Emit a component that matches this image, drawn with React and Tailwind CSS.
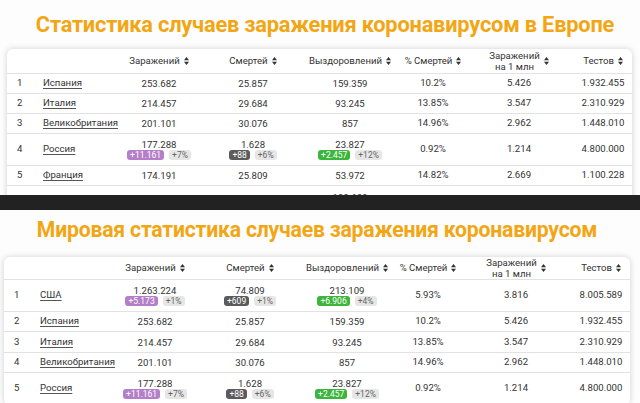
import React from "react";

const Sort = () => (
  <svg width="5" height="8" viewBox="0 0 5 8" className="ml-[4px] shrink-0">
    <path d="M2.5 0L5 3.2H0z M2.5 8L0 4.8h5z" fill="#333" />
  </svg>
);

const badgeColors = {
  p: "bg-[#b47fc8] text-white",
  d: "bg-[#5b5b5b] text-white",
  g: "bg-[#3bb53b] text-white",
  n: "bg-[#e6e6e6] text-[#666]",
};

const Badge = ({ kind, children }) => (
  <span className={`${badgeColors[kind]} inline-block rounded-[3px] px-[3px] text-[8.5px] leading-[10.5px] h-[10.5px]`}>
    {children}
  </span>
);

const Val = ({ v, b, pct, kind }) => (
  <div className="flex flex-col items-center">
    <span className="leading-[11px]">{v}</span>
    {b && (
      <div className="flex items-center gap-[5px]">
        <Badge kind={kind}>{b}</Badge>
        <Badge kind="n">{pct}</Badge>
      </div>
    )}
  </div>
);

const Table = ({ cols, headerH, rows, left, width }) => (
  <div
    className="bg-white rounded-[6px] shadow-[0_0_6px_rgba(0,0,0,0.18)] text-[#333] text-[9.6px]"
    style={{ marginLeft: left, width }}
  >
    <div className="grid items-center border-b border-[#e2e2e2]" style={{ gridTemplateColumns: cols, height: headerH }}>
      <div />
      <div />
      <div className="flex items-center justify-center">Заражений<Sort /></div>
      <div className="flex items-center justify-center">Смертей<Sort /></div>
      <div className="flex items-center justify-center">Выздоровлений<Sort /></div>
      <div className="flex items-center justify-center">% Смертей<Sort /></div>
      <div className="flex items-center justify-center">
        <span className="text-center leading-[11px]">Заражений<br />на 1 млн</span>
        <Sort />
      </div>
      <div className="flex items-center justify-center">Тестов<Sort /></div>
    </div>
    {rows.map((r) => (
      <div
        key={r.n}
        className="grid items-center border-b border-[#e2e2e2]"
        style={{ gridTemplateColumns: cols, height: r.h }}
      >
        <div className="pl-[10px]">{r.partial ? "" : r.n}</div>
        <div className="pl-[8px] whitespace-nowrap">
          {r.c && <span className="underline underline-offset-[1.5px] decoration-[#555]">{r.c}</span>}
        </div>
        <div className="text-center">{r.a && <Val {...r.a} kind="p" />}</div>
        <div className="text-center">{r.d && <Val {...r.d} kind="d" />}</div>
        <div className={`text-center ${r.top ? "self-start pt-[6px]" : ""}`}>{r.r && <Val {...r.r} kind="g" />}</div>
        <div className="text-center">{r.pd}</div>
        <div className="text-center">{r.m}</div>
        <div className="text-center">{r.t}</div>
      </div>
    ))}
  </div>
);

const spain = { c: "Испания", a: { v: "253.682" }, d: { v: "25.857" }, r: { v: "159.359" }, pd: "10.2%", m: "5.426", t: "1.932.455" };
const italy = { c: "Италия", a: { v: "214.457" }, d: { v: "29.684" }, r: { v: "93.245" }, pd: "13.85%", m: "3.547", t: "2.310.929" };
const uk = { c: "Великобритания", a: { v: "201.101" }, d: { v: "30.076" }, r: { v: "857" }, pd: "14.96%", m: "2.962", t: "1.448.010" };
const russia = {
  c: "Россия",
  a: { v: "177.288", b: "+11.161", pct: "+7%" },
  d: { v: "1.628", b: "+88", pct: "+6%" },
  r: { v: "23.827", b: "+2.457", pct: "+12%" },
  pd: "0.92%",
  m: "1.214",
  t: "4.800.000",
};

const rows1 = [
  { n: 1, h: 20, ...spain },
  { n: 2, h: 20, ...italy },
  { n: 3, h: 20, ...uk },
  { n: 4, h: 32, ...russia },
  { n: 5, h: 20, c: "Франция", a: { v: "174.191" }, d: { v: "25.809" }, r: { v: "53.972" }, pd: "14.82%", m: "2.669", t: "1.100.228" },
  { n: 6, h: 32, top: true, partial: true, r: { v: "130.600" } },
];

const rows2 = [
  {
    n: 1, h: 32, c: "США",
    a: { v: "1.263.224", b: "+5.173", pct: "+1%" },
    d: { v: "74.809", b: "+609", pct: "+1%" },
    r: { v: "213.109", b: "+6.906", pct: "+4%" },
    pd: "5.93%", m: "3.816", t: "8.005.589",
  },
  { n: 2, h: 20, ...spain },
  { n: 3, h: 21, ...italy },
  { n: 4, h: 20, ...uk },
  { n: 5, h: 32, ...russia },
];

const titleCls = "text-center font-bold text-[#f2a614] tracking-[-0.2px] leading-none whitespace-nowrap";

export default function App() {
  return (
    <div className="w-[640px] h-[403px] overflow-hidden bg-white" style={{ fontFamily: "Roboto, 'Noto Sans', sans-serif" }}>
      <div className="h-[195px] overflow-hidden bg-[#fdfdfd]">
        <div className="h-[49px] flex items-start justify-center pt-[14px] pl-[10px]">
          <h1 className={`${titleCls} text-[21.8px]`}>Статистика случаев заражения коронавирусом в Европе</h1>
        </div>
        <Table cols="28px 75px 98px 90px 104px 62px 110px 58px" headerH={25} rows={rows1} left={7} width={625} />
      </div>
      <div className="h-[15px] bg-[#222]" />
      <div className="h-[193px] overflow-hidden bg-[#fdfdfd]">
        <div className="h-[47px] flex items-start justify-center pt-[9px] pr-[6px]">
          <h1 className={`${titleCls} text-[21.2px]`}>Мировая статистика случаев заражения коронавирусом</h1>
        </div>
        <Table cols="28px 76px 94px 96px 98px 64px 112px 58px" headerH={23} rows={rows2} left={4} width={626} />
      </div>
    </div>
  );
}
